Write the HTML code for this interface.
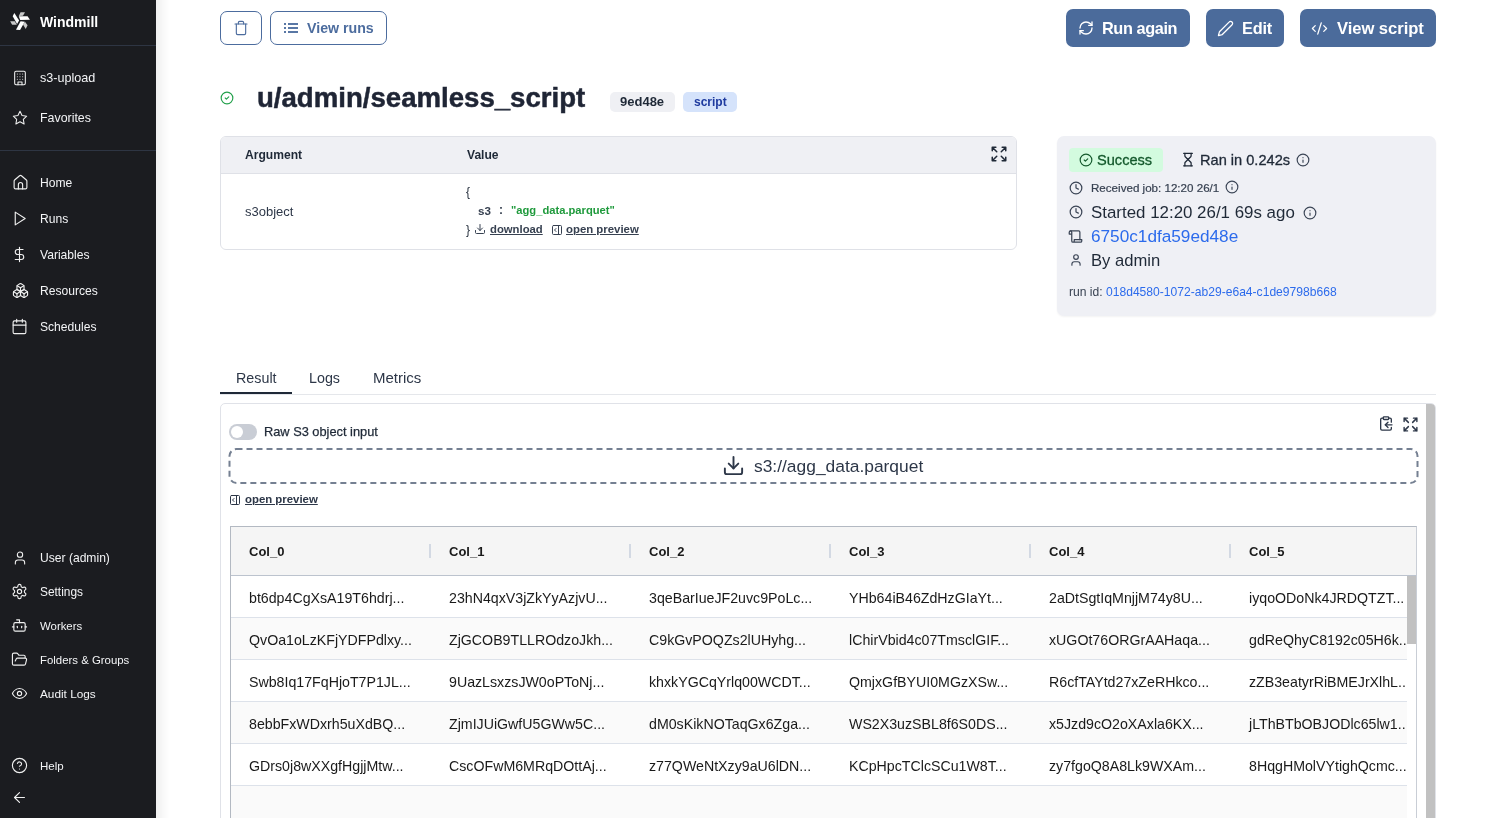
<!DOCTYPE html>
<html><head><meta charset="utf-8">
<style>
*{box-sizing:border-box;margin:0;padding:0}
html,body{width:1493px;height:818px;overflow:hidden;background:#fff;font-family:"Liberation Sans",sans-serif;color:#2d3748}
.a{position:absolute;white-space:nowrap}
svg.i{position:absolute;fill:none;stroke-linecap:round;stroke-linejoin:round}
#side{position:absolute;left:0;top:0;width:156px;height:818px;background:#1b1c20}
#side .sep{position:absolute;left:0;width:156px;height:1px;background:#2e3543}
#side .t{position:absolute;left:40px;color:#f3f4f6;font-size:12.1px;line-height:14px;white-space:nowrap}
#side svg.i{stroke:#f0f0f0;stroke-width:1.6}
#shadow{position:absolute;left:156px;top:0;width:13px;height:818px;background:linear-gradient(to right,rgba(0,0,0,0.06),rgba(0,0,0,0))}
.btn-o{position:absolute;border:1px solid #4c6c9e;border-radius:7px;background:#fff}
.btn-f{position:absolute;border-radius:7px;background:#4b6b9b}
</style></head>
<body>
<!-- SIDEBAR -->
<div id="root" style="position:absolute;left:0;top:0;width:1493px;height:818px;will-change:transform">
<div id="side">
  <svg class="a" style="left:9px;top:11px" width="22" height="21" viewBox="9 11 22 21">
    <g fill="#ffffff">
      <polygon points="14.35,12.88 19.12,20.58 17.1,23.88 12.7,16.37"/>
      <polygon points="18.75,16.18 27.55,16.18 29.94,19.85 20.22,20.03"/>
      <polygon points="16,29.75 20.03,29.94 24.8,21.68 20.58,21.32"/>
    </g>
    <g fill="#c9c9c9">
      <polygon points="20.58,12.15 24.98,12.15 22.97,15.63 18.75,16"/>
      <polygon points="10.13,21.32 14.72,21.13 16.92,24.8 12.15,24.8"/>
      <polygon points="24.98,21.87 27.55,25.35 25.72,29.02 22.97,24.43"/>
    </g>
  </svg>
  <div class="a" style="left:40px;top:14px;font-size:14px;font-weight:bold;color:#fff;line-height:17px">Windmill</div>
  <div class="sep" style="top:45px"></div>

  <svg class="i" style="left:12px;top:69px" width="16" height="18" viewBox="0 0 24 24"><rect width="16" height="20" x="4" y="2" rx="2" ry="2"/><path d="M9 22v-4h6v4"/><path d="M8 6h.01M16 6h.01M12 6h.01M12 10h.01M12 14h.01M16 10h.01M16 14h.01M8 10h.01M8 14h.01"/></svg>
  <div class="t" style="top:71px;font-size:12.6px">s3-upload</div>
  <svg class="i" style="left:12px;top:110px" width="16" height="16" viewBox="0 0 24 24"><polygon points="12 2 15.09 8.26 22 9.27 17 14.14 18.18 21.02 12 17.77 5.82 21.02 7 14.14 2 9.27 8.91 8.26 12 2"/></svg>
  <div class="t" style="top:111px;font-size:12.4px">Favorites</div>
  <div class="sep" style="top:150px"></div>

  <svg class="i" style="left:12px;top:174px" width="17" height="17" viewBox="0 0 24 24"><path d="M3 10a2 2 0 0 1 .709-1.528l7-5.999a2 2 0 0 1 2.582 0l7 5.999A2 2 0 0 1 21 10v9a2 2 0 0 1-2 2H5a2 2 0 0 1-2-2z"/><path d="M9 21v-6a3 3 0 0 1 6 0v6"/></svg>
  <div class="t" style="top:176px">Home</div>
  <svg class="i" style="left:11px;top:210px" width="17" height="17" viewBox="0 0 24 24"><polygon points="6 3 20 12 6 21 6 3"/></svg>
  <div class="t" style="top:212px">Runs</div>
  <svg class="i" style="left:11px;top:246px" width="17" height="17" viewBox="0 0 24 24"><line x1="12" x2="12" y1="2" y2="22"/><path d="M17 5H9.5a3.5 3.5 0 0 0 0 7h5a3.5 3.5 0 0 1 0 7H6"/></svg>
  <div class="t" style="top:248px">Variables</div>
  <svg class="i" style="left:12px;top:282px" width="17" height="17" viewBox="0 0 24 24"><path d="M2.97 12.92A2 2 0 0 0 2 14.63v3.24a2 2 0 0 0 .97 1.71l3 1.8a2 2 0 0 0 2.06 0L12 19v-5.5l-5-3-4.03 2.42Z"/><path d="m7 16.5-4.74-2.85"/><path d="m7 16.5 5-3"/><path d="M7 16.5v5.17"/><path d="M12 13.5V19l3.97 2.38a2 2 0 0 0 2.06 0l3-1.8a2 2 0 0 0 .97-1.71v-3.24a2 2 0 0 0-.97-1.71L17 10.5l-5 3Z"/><path d="m17 16.5-5-3"/><path d="m17 16.5 4.74-2.85"/><path d="M17 16.5v5.17"/><path d="M7.97 4.42A2 2 0 0 0 7 6.13v4.37l5 3 5-3V6.13a2 2 0 0 0-.97-1.71l-3-1.8a2 2 0 0 0-2.06 0l-3 1.8Z"/><path d="M12 8 7.26 5.15"/><path d="m12 8 4.74-2.85"/><path d="M12 13.5V8"/></svg>
  <div class="t" style="top:284px">Resources</div>
  <svg class="i" style="left:11px;top:318px" width="17" height="17" viewBox="0 0 24 24"><rect width="18" height="18" x="3" y="4" rx="2" ry="2"/><line x1="16" x2="16" y1="2" y2="6"/><line x1="8" x2="8" y1="2" y2="6"/><line x1="3" x2="21" y1="10" y2="10"/></svg>
  <div class="t" style="top:320px">Schedules</div>

  <svg class="i" style="left:12px;top:550px" width="16" height="16" viewBox="0 0 24 24"><path d="M19 21v-2a4 4 0 0 0-4-4H9a4 4 0 0 0-4 4v2"/><circle cx="12" cy="7" r="4"/></svg>
  <div class="t" style="top:551px">User (admin)</div>
  <svg class="i" style="left:11px;top:583px" width="17" height="17" viewBox="0 0 24 24"><path d="M12.22 2h-.44a2 2 0 0 0-2 2v.18a2 2 0 0 1-1 1.73l-.43.25a2 2 0 0 1-2 0l-.15-.08a2 2 0 0 0-2.73.73l-.22.38a2 2 0 0 0 .73 2.730l.15.1a2 2 0 0 1 1 1.72v.51a2 2 0 0 1-1 1.74l-.15.09a2 2 0 0 0-.73 2.73l.22.38a2 2 0 0 0 2.73.73l.15-.08a2 2 0 0 1 2 0l.43.25a2 2 0 0 1 1 1.73V20a2 2 0 0 0 2 2h.44a2 2 0 0 0 2-2v-.18a2 2 0 0 1 1-1.73l.43-.25a2 2 0 0 1 2 0l.15.08a2 2 0 0 0 2.73-.73l.22-.39a2 2 0 0 0-.73-2.73l-.15-.08a2 2 0 0 1-1-1.74v-.5a2 2 0 0 1 1-1.74l.15-.09a2 2 0 0 0 .73-2.73l-.22-.38a2 2 0 0 0-2.73-.73l-.15.08a2 2 0 0 1-2 0l-.43-.25a2 2 0 0 1-1-1.73V4a2 2 0 0 0-2-2z"/><circle cx="12" cy="12" r="3"/></svg>
  <div class="t" style="top:585px;font-size:11.9px">Settings</div>
  <svg class="i" style="left:11px;top:617px" width="17" height="17" viewBox="0 0 24 24"><path d="M12 8V4H8"/><rect width="16" height="12" x="4" y="8" rx="2"/><path d="M2 14h2"/><path d="M20 14h2"/><path d="M15 13v2"/><path d="M9 13v2"/></svg>
  <div class="t" style="top:619px;font-size:11.4px">Workers</div>
  <svg class="i" style="left:11px;top:651px" width="17" height="17" viewBox="0 0 24 24"><path d="m6 14 1.5-2.9A2 2 0 0 1 9.24 10H20a2 2 0 0 1 1.94 2.5l-1.54 6a2 2 0 0 1-1.95 1.5H4a2 2 0 0 1-2-2V5a2 2 0 0 1 2-2h3.9a2 2 0 0 1 1.69.9l.81 1.2a2 2 0 0 0 1.67.9H18a2 2 0 0 1 2 2v2"/></svg>
  <div class="t" style="top:653px;font-size:11.4px">Folders &amp; Groups</div>
  <svg class="i" style="left:11px;top:685px" width="17" height="17" viewBox="0 0 24 24"><path d="M2 12s3-7 10-7 10 7 10 7-3 7-10 7-10-7-10-7Z"/><circle cx="12" cy="12" r="3"/></svg>
  <div class="t" style="top:687px;font-size:11.8px">Audit Logs</div>

  <svg class="i" style="left:11px;top:757px" width="17" height="17" viewBox="0 0 24 24"><circle cx="12" cy="12" r="10"/><path d="M9.09 9a3 3 0 0 1 5.83 1c0 2-3 3-3 3"/><path d="M12 17h.01"/></svg>
  <div class="t" style="top:759px;font-size:11.5px">Help</div>
  <svg class="i" style="left:11px;top:789px" width="17" height="17" viewBox="0 0 24 24"><path d="m12 19-7-7 7-7"/><path d="M19 12H5"/></svg>
</div>
<div id="shadow"></div>

<!-- MAIN -->
<div id="main">
  <!-- top buttons -->
  <div class="btn-o" style="left:220px;top:11px;width:42px;height:34px"></div>
  <svg class="i" style="left:233px;top:20px;stroke:#4c6c9e;stroke-width:1.7" width="16" height="16" viewBox="0 0 24 24"><path d="M3 6h18"/><path d="M19 6v14c0 1-1 2-2 2H7c-1 0-2-1-2-2V6"/><path d="M8 6V4c0-1 1-2 2-2h4c1 0 2 1 2 2v2"/></svg>
  <div class="btn-o" style="left:270px;top:11px;width:117px;height:34px"></div>
  <svg class="a" style="left:284px;top:23px" width="14" height="10"><g fill="#4c6c9e" opacity="0.92"><rect x="0" y="0" width="2" height="2"/><rect x="0" y="4" width="2" height="2"/><rect x="0" y="8" width="2" height="2"/><rect x="4" y="0" width="10" height="2"/><rect x="4" y="4" width="10" height="2"/><rect x="4" y="8" width="10" height="2"/></g></svg>
  <div class="a" style="left:307px;top:20px;font-size:14.2px;line-height:17px;font-weight:bold;color:#4c6c9e">View runs</div>

  <div class="btn-f" style="left:1066px;top:9px;width:124px;height:38px"></div>
  <svg class="i" style="left:1078px;top:20px;stroke:#fff;stroke-width:2" width="16" height="16" viewBox="0 0 24 24"><path d="M3 12a9 9 0 0 1 9-9 9.75 9.75 0 0 1 6.74 2.74L21 8"/><path d="M21 3v5h-5"/><path d="M21 12a9 9 0 0 1-9 9 9.75 9.75 0 0 1-6.74-2.74L3 16"/><path d="M8 16H3v5"/></svg>
  <div class="a" style="left:1102px;top:19px;font-size:16.3px;line-height:19px;font-weight:bold;color:#fff;letter-spacing:-0.4px">Run again</div>
  <div class="btn-f" style="left:1206px;top:9px;width:78px;height:38px"></div>
  <svg class="i" style="left:1217px;top:20px;stroke:#fff;stroke-width:1.8" width="17" height="17" viewBox="0 0 24 24"><path d="M17 3a2.85 2.83 0 1 1 4 4L7.5 20.5 2 22l1.5-5.5Z"/></svg>
  <div class="a" style="left:1242px;top:19px;font-size:16.3px;line-height:19px;font-weight:bold;color:#fff;letter-spacing:-0.2px">Edit</div>
  <div class="btn-f" style="left:1300px;top:9px;width:136px;height:38px"></div>
  <svg class="i" style="left:1311px;top:20px;stroke:#fff;stroke-width:1.8" width="17" height="17" viewBox="0 0 24 24"><path d="m18 16 4-4-4-4"/><path d="m6 8-4 4 4 4"/><path d="m14.5 4-5 16"/></svg>
  <div class="a" style="left:1337px;top:19px;font-size:16.6px;line-height:19px;font-weight:bold;color:#fff;letter-spacing:-0.05px">View script</div>

  <!-- title -->
  <svg class="i" style="left:220px;top:91px;stroke:#22a04b;stroke-width:2" width="14" height="14" viewBox="0 0 24 24"><circle cx="12" cy="12" r="10"/><path d="m9 12 2 2 4-4"/></svg>
  <div class="a" style="left:257px;top:82px;font-size:27.6px;line-height:32px;font-weight:bold;color:#1f2535;-webkit-text-stroke:0.5px #1f2535">u/admin/seamless_script</div>
  <div class="a" style="left:610px;top:92px;width:65px;height:20px;border-radius:5px;background:#eff0f4"></div>
  <div class="a" style="left:620px;top:94px;font-size:13px;line-height:15px;font-weight:bold;color:#1f2937">9ed48e</div>
  <div class="a" style="left:683px;top:92px;width:54px;height:20px;border-radius:5px;background:#d5e3fb"></div>
  <div class="a" style="left:694px;top:95px;font-size:12px;line-height:15px;font-weight:bold;color:#1e3a9f">script</div>

  <!-- args table -->
  <div class="a" style="left:220px;top:136px;width:797px;height:114px;border:1px solid #dfe1e7;border-radius:6px;overflow:hidden">
    <div class="a" style="left:0;top:0;width:795px;height:37px;background:#eff0f4;border-bottom:1px solid #dfe1e7"></div>
  </div>
  <div class="a" style="left:245px;top:148px;font-size:12.1px;line-height:15px;font-weight:bold;color:#1f2937">Argument</div>
  <div class="a" style="left:467px;top:148px;font-size:12.1px;line-height:15px;font-weight:bold;color:#1f2937">Value</div>
  <svg class="i" style="left:990px;top:145px;stroke:#1f2937;stroke-width:2" width="18" height="18" viewBox="0 0 24 24"><path d="m21 21-6-6m6 6v-4.8m0 4.8h-4.8"/><path d="M3 16.2V21m0 0h4.8M3 21l6-6"/><path d="M21 7.8V3m0 0h-4.8M21 3l-6 6"/><path d="M3 7.8V3m0 0h4.8M3 3l6 6"/></svg>
  <div class="a" style="left:245px;top:204px;font-size:13px;line-height:15px;color:#2d3748">s3object</div>
  <div class="a" style="left:466px;top:185px;font-size:12px;line-height:14px;color:#1f2937">{</div>
  <div class="a" style="left:478px;top:204px;font-size:11.6px;line-height:13px;font-weight:bold;color:#374151">s3</div>
  <div class="a" style="left:499px;top:204px;font-size:12px;line-height:13px;font-weight:bold;color:#374151">:</div>
  <div class="a" style="left:511px;top:204px;font-size:11.2px;line-height:13px;font-weight:bold;color:#1f9a3c">"agg_data.parquet"</div>
  <div class="a" style="left:466px;top:223px;font-size:12px;line-height:14px;color:#1f2937">}</div>
  <svg class="i" style="left:474px;top:223px;stroke:#374151;stroke-width:2" width="12" height="12" viewBox="0 0 24 24"><path d="M21 15v4a2 2 0 0 1-2 2H5a2 2 0 0 1-2-2v-4"/><polyline points="7 10 12 15 17 10"/><line x1="12" x2="12" y1="15" y2="3"/></svg>
  <div class="a" style="left:490px;top:223px;font-size:11.3px;line-height:13px;font-weight:bold;color:#374151;text-decoration:underline">download</div>
  <svg class="i" style="left:551px;top:224px;stroke:#374151;stroke-width:2" width="12" height="12" viewBox="0 0 24 24"><rect width="18" height="18" x="3" y="3" rx="2"/><path d="M15 3v18"/><path d="m10 15-3-3 3-3"/></svg>
  <div class="a" style="left:566px;top:223px;font-size:11.4px;line-height:13px;font-weight:bold;color:#374151;text-decoration:underline">open preview</div>

  <!-- status card -->
  <div class="a" style="left:1057px;top:136px;width:379px;height:180px;border-radius:7px;background:#eff0f5;box-shadow:0 1px 2px rgba(0,0,0,0.05)"></div>
  <div class="a" style="left:1069px;top:148px;width:94px;height:24px;border-radius:4px;background:#d3fbdf"></div>
  <svg class="i" style="left:1079px;top:153px;stroke:#14592c;stroke-width:2" width="14" height="14" viewBox="0 0 24 24"><circle cx="12" cy="12" r="10"/><path d="m9 12 2 2 4-4"/></svg>
  <div class="a" style="left:1097px;top:151.5px;font-size:14.6px;line-height:17px;color:#14592c;-webkit-text-stroke:0.3px #14592c">Success</div>
  <svg class="i" style="left:1180px;top:152px;stroke:#1f2937;stroke-width:2" width="16" height="15" viewBox="0 0 24 24"><path d="M5 22h14"/><path d="M5 2h14"/><path d="M17 22v-4.172a2 2 0 0 0-.586-1.414L12 12l-4.414 4.414A2 2 0 0 0 7 17.828V22"/><path d="M7 2v4.172a2 2 0 0 0 .586 1.414L12 12l4.414-4.414A2 2 0 0 0 17 6.172V2"/></svg>
  <div class="a" style="left:1200px;top:152px;font-size:14.6px;line-height:17px;color:#1f2937;-webkit-text-stroke:0.3px #1f2937">Ran in 0.242s</div>
  <svg class="i" style="left:1296px;top:153px;stroke:#3b4556;stroke-width:2" width="14" height="14" viewBox="0 0 24 24"><circle cx="12" cy="12" r="10"/><path d="M12 16v-4"/><path d="M12 8h.01"/></svg>

  <svg class="i" style="left:1069px;top:181px;stroke:#3b4556;stroke-width:2.1" width="14" height="14" viewBox="0 0 24 24"><circle cx="12" cy="12" r="10"/><polyline points="12 6 12 12 16 14"/></svg>
  <div class="a" style="left:1091px;top:181px;font-size:11.6px;line-height:14px;color:#374151;-webkit-text-stroke:0.2px #374151">Received job: 12:20 26/1</div>
  <svg class="i" style="left:1225px;top:180px;stroke:#3b4556;stroke-width:2" width="14" height="14" viewBox="0 0 24 24"><circle cx="12" cy="12" r="10"/><path d="M12 16v-4"/><path d="M12 8h.01"/></svg>

  <svg class="i" style="left:1069px;top:205px;stroke:#3b4556;stroke-width:2.1" width="14" height="14" viewBox="0 0 24 24"><circle cx="12" cy="12" r="10"/><polyline points="12 6 12 12 16 14"/></svg>
  <div class="a" style="left:1091px;top:203px;font-size:16.9px;line-height:20px;color:#1f2937">Started 12:20 26/1 69s ago</div>
  <svg class="i" style="left:1303px;top:206px;stroke:#3b4556;stroke-width:2" width="14" height="14" viewBox="0 0 24 24"><circle cx="12" cy="12" r="10"/><path d="M12 16v-4"/><path d="M12 8h.01"/></svg>

  <svg class="i" style="left:1068px;top:228.5px;stroke:#3b4556;stroke-width:2" width="15" height="15" viewBox="0 0 24 24"><path d="M8 21h12a2 2 0 0 0 2-2v-2H10v2a2 2 0 1 1-4 0V5a2 2 0 1 0-4 0v3h4"/><path d="M19 17V5a2 2 0 0 0-2-2H4"/></svg>
  <div class="a" style="left:1091px;top:226px;font-size:17.2px;line-height:20px;color:#2c6bec">6750c1dfa59ed48e</div>
  <svg class="i" style="left:1069px;top:253px;stroke:#3b4556;stroke-width:2" width="14" height="14" viewBox="0 0 24 24"><path d="M19 21v-2a4 4 0 0 0-4-4H9a4 4 0 0 0-4 4v2"/><circle cx="12" cy="7" r="4"/></svg>
  <div class="a" style="left:1091px;top:251px;font-size:16.6px;line-height:20px;color:#1f2937">By admin</div>
  <div class="a" style="left:1069px;top:285px;font-size:12.1px;line-height:14px;color:#374151">run id: <span style="color:#2c6bec">018d4580-1072-ab29-e6a4-c1de9798b668</span></div>

  <!-- tabs -->
  <div class="a" style="left:236px;top:370px;font-size:14.3px;line-height:17px;color:#2d3748">Result</div>
  <div class="a" style="left:309px;top:370px;font-size:14.3px;line-height:17px;color:#2d3748">Logs</div>
  <div class="a" style="left:373px;top:369px;font-size:15px;line-height:17px;color:#2d3748">Metrics</div>
  <div class="a" style="left:220px;top:394px;width:1216px;height:1px;background:#e5e7eb"></div>
  <div class="a" style="left:220px;top:392px;width:72px;height:2px;background:#1f2937"></div>

  <!-- result panel -->
  <div id="rp" class="a" style="left:220px;top:403px;width:1216px;height:430px;border:1px solid #e0e2e8;border-radius:5px;overflow:hidden;background:#fff">
    <div class="a" style="left:1205px;top:0;width:9px;height:430px;background:#c1c1c1"></div>
  </div>
  <svg class="i" style="left:1378px;top:415px;stroke:#2d3748;stroke-width:2" width="16" height="17" viewBox="0 0 24 24"><rect width="8" height="4" x="8" y="2" rx="1" ry="1"/><path d="M8 4H6a2 2 0 0 0-2 2v14a2 2 0 0 0 2 2h12a2 2 0 0 0 2-2v-2"/><path d="M16 4h2a2 2 0 0 1 2 2v4"/><path d="M21 14H11"/><path d="m15 10-4 4 4 4"/></svg>
  <svg class="i" style="left:1401.5px;top:415.5px;stroke:#2d3748;stroke-width:2" width="17" height="17" viewBox="0 0 24 24"><path d="m21 21-6-6m6 6v-4.8m0 4.8h-4.8"/><path d="M3 16.2V21m0 0h4.8M3 21l6-6"/><path d="M21 7.8V3m0 0h-4.8M21 3l-6 6"/><path d="M3 7.8V3m0 0h4.8M3 3l6 6"/></svg>
  <div class="a" style="left:229px;top:424px;width:28px;height:16px;border-radius:8px;background:#c9cdd5"></div>
  <div class="a" style="left:231px;top:426px;width:12px;height:12px;border-radius:6px;background:#fff"></div>
  <div class="a" style="left:264px;top:424px;font-size:12.8px;line-height:15px;color:#1f2937;-webkit-text-stroke:0.25px #1f2937">Raw S3 object input</div>
  <svg class="a" style="left:228px;top:448px" width="1191" height="37"><rect x="1.5" y="1" width="1188" height="34" rx="7" fill="none" stroke="#758092" stroke-width="2" stroke-dasharray="6 4"/></svg>
  <svg class="i" style="left:722px;top:454px;stroke:#2d3748;stroke-width:2" width="23" height="23" viewBox="0 0 24 24"><path d="M21 15v4a2 2 0 0 1-2 2H5a2 2 0 0 1-2-2v-4"/><polyline points="7 10 12 15 17 10"/><line x1="12" x2="12" y1="15" y2="3"/></svg>
  <div class="a" style="left:754px;top:456px;font-size:17.4px;line-height:20px;color:#2d3748">s3://agg_data.parquet</div>
  <svg class="i" style="left:229px;top:494px;stroke:#2d3748;stroke-width:2" width="12" height="12" viewBox="0 0 24 24"><rect width="18" height="18" x="3" y="3" rx="2"/><path d="M15 3v18"/><path d="m10 15-3-3 3-3"/></svg>
  <div class="a" style="left:245px;top:493px;font-size:11.4px;line-height:13px;font-weight:bold;color:#2d3748;text-decoration:underline">open preview</div>

  <div id="dt" class="a" style="left:230px;top:526px;width:1187px;height:300px;border-top:1px solid #b3b9c2;border-left:1px solid #b3b9c2;border-right:1px solid #c9ced6;background:#fafafa;overflow:hidden">
<div class="a" style="left:0;top:0;width:1186px;height:49px;background:#f5f5f5;border-bottom:1px solid #bcc3ce"></div>
<div class="a" style="left:18px;top:17px;font-size:13px;line-height:15px;font-weight:bold;color:#1a1a1a">Col_0</div>
<div class="a" style="left:198px;top:17px;width:2px;height:14px;background:#d3d9e3"></div>
<div class="a" style="left:218px;top:17px;font-size:13px;line-height:15px;font-weight:bold;color:#1a1a1a">Col_1</div>
<div class="a" style="left:398px;top:17px;width:2px;height:14px;background:#d3d9e3"></div>
<div class="a" style="left:418px;top:17px;font-size:13px;line-height:15px;font-weight:bold;color:#1a1a1a">Col_2</div>
<div class="a" style="left:598px;top:17px;width:2px;height:14px;background:#d3d9e3"></div>
<div class="a" style="left:618px;top:17px;font-size:13px;line-height:15px;font-weight:bold;color:#1a1a1a">Col_3</div>
<div class="a" style="left:798px;top:17px;width:2px;height:14px;background:#d3d9e3"></div>
<div class="a" style="left:818px;top:17px;font-size:13px;line-height:15px;font-weight:bold;color:#1a1a1a">Col_4</div>
<div class="a" style="left:998px;top:17px;width:2px;height:14px;background:#d3d9e3"></div>
<div class="a" style="left:1018px;top:17px;font-size:13px;line-height:15px;font-weight:bold;color:#1a1a1a">Col_5</div>
<div class="a" style="left:0;top:49px;width:1176px;height:42px;background:#ffffff;border-bottom:1px solid #dde2ea;overflow:hidden">
<div class="a" style="left:18px;top:14px;font-size:14.2px;line-height:16px;color:#1a1a1a">bt6dp4CgXsA19T6hdrj...</div>
<div class="a" style="left:218px;top:14px;font-size:14.2px;line-height:16px;color:#1a1a1a">23hN4qxV3jZkYyAzjvU...</div>
<div class="a" style="left:418px;top:14px;font-size:14.2px;line-height:16px;color:#1a1a1a">3qeBarIueJF2uvc9PoLc...</div>
<div class="a" style="left:618px;top:14px;font-size:14.2px;line-height:16px;color:#1a1a1a">YHb64iB46ZdHzGIaYt...</div>
<div class="a" style="left:818px;top:14px;font-size:14.2px;line-height:16px;color:#1a1a1a">2aDtSgtIqMnjjM74y8U...</div>
<div class="a" style="left:1018px;top:14px;font-size:14.2px;line-height:16px;color:#1a1a1a">iyqoODoNk4JRDQTZT...</div>
</div>
<div class="a" style="left:0;top:91px;width:1176px;height:42px;background:#fafafa;border-bottom:1px solid #dde2ea;overflow:hidden">
<div class="a" style="left:18px;top:14px;font-size:14.2px;line-height:16px;color:#1a1a1a">QvOa1oLzKFjYDFPdlxy...</div>
<div class="a" style="left:218px;top:14px;font-size:14.2px;line-height:16px;color:#1a1a1a">ZjGCOB9TLLROdzoJkh...</div>
<div class="a" style="left:418px;top:14px;font-size:14.2px;line-height:16px;color:#1a1a1a">C9kGvPOQZs2lUHyhg...</div>
<div class="a" style="left:618px;top:14px;font-size:14.2px;line-height:16px;color:#1a1a1a">lChirVbid4c07TmsclGIF...</div>
<div class="a" style="left:818px;top:14px;font-size:14.2px;line-height:16px;color:#1a1a1a">xUGOt76ORGrAAHaqa...</div>
<div class="a" style="left:1018px;top:14px;font-size:14.2px;line-height:16px;color:#1a1a1a">gdReQhyC8192c05H6k...</div>
</div>
<div class="a" style="left:0;top:133px;width:1176px;height:42px;background:#ffffff;border-bottom:1px solid #dde2ea;overflow:hidden">
<div class="a" style="left:18px;top:14px;font-size:14.2px;line-height:16px;color:#1a1a1a">Swb8Iq17FqHjoT7P1JL...</div>
<div class="a" style="left:218px;top:14px;font-size:14.2px;line-height:16px;color:#1a1a1a">9UazLsxzsJW0oPToNj...</div>
<div class="a" style="left:418px;top:14px;font-size:14.2px;line-height:16px;color:#1a1a1a">khxkYGCqYrlq00WCDT...</div>
<div class="a" style="left:618px;top:14px;font-size:14.2px;line-height:16px;color:#1a1a1a">QmjxGfBYUI0MGzXSw...</div>
<div class="a" style="left:818px;top:14px;font-size:14.2px;line-height:16px;color:#1a1a1a">R6cfTAYtd27xZeRHkco...</div>
<div class="a" style="left:1018px;top:14px;font-size:14.2px;line-height:16px;color:#1a1a1a">zZB3eatyrRiBMEJrXlhL...</div>
</div>
<div class="a" style="left:0;top:175px;width:1176px;height:42px;background:#fafafa;border-bottom:1px solid #dde2ea;overflow:hidden">
<div class="a" style="left:18px;top:14px;font-size:14.2px;line-height:16px;color:#1a1a1a">8ebbFxWDxrh5uXdBQ...</div>
<div class="a" style="left:218px;top:14px;font-size:14.2px;line-height:16px;color:#1a1a1a">ZjmIJUiGwfU5GWw5C...</div>
<div class="a" style="left:418px;top:14px;font-size:14.2px;line-height:16px;color:#1a1a1a">dM0sKikNOTaqGx6Zga...</div>
<div class="a" style="left:618px;top:14px;font-size:14.2px;line-height:16px;color:#1a1a1a">WS2X3uzSBL8f6S0DS...</div>
<div class="a" style="left:818px;top:14px;font-size:14.2px;line-height:16px;color:#1a1a1a">x5Jzd9cO2oXAxla6KX...</div>
<div class="a" style="left:1018px;top:14px;font-size:14.2px;line-height:16px;color:#1a1a1a">jLThBTbOBJODlc65lw1...</div>
</div>
<div class="a" style="left:0;top:217px;width:1176px;height:42px;background:#ffffff;border-bottom:1px solid #dde2ea;overflow:hidden">
<div class="a" style="left:18px;top:14px;font-size:14.2px;line-height:16px;color:#1a1a1a">GDrs0j8wXXgfHgjjMtw...</div>
<div class="a" style="left:218px;top:14px;font-size:14.2px;line-height:16px;color:#1a1a1a">CscOFwM6MRqDOttAj...</div>
<div class="a" style="left:418px;top:14px;font-size:14.2px;line-height:16px;color:#1a1a1a">z77QWeNtXzy9aU6lDN...</div>
<div class="a" style="left:618px;top:14px;font-size:14.2px;line-height:16px;color:#1a1a1a">KCpHpcTClcSCu1W8T...</div>
<div class="a" style="left:818px;top:14px;font-size:14.2px;line-height:16px;color:#1a1a1a">zy7fgoQ8A8Lk9WXAm...</div>
<div class="a" style="left:1018px;top:14px;font-size:14.2px;line-height:16px;color:#1a1a1a">8HqgHMolVYtighQcmc...</div>
</div>
<div class="a" style="left:1176px;top:49px;width:10px;height:260px;background:#fff"></div><div class="a" style="left:1176px;top:49px;width:10px;height:68px;background:#c1c1c1"></div>
</div>
</div>
</div>
</body></html>
